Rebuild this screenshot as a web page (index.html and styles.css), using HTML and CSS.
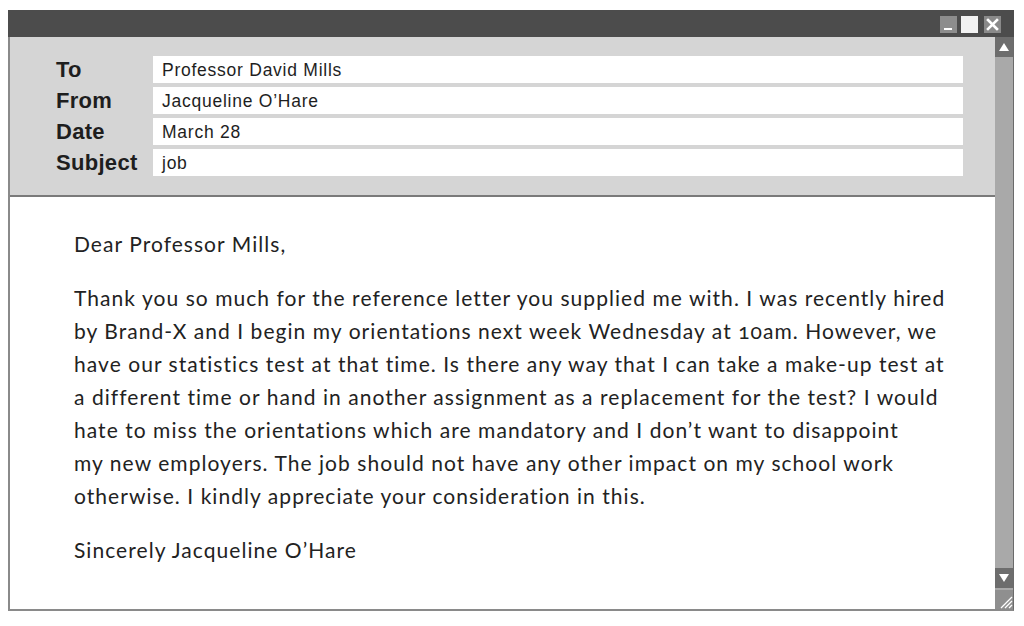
FILE: index.html
```html
<!DOCTYPE html>
<html>
<head>
<meta charset="utf-8">
<link rel="stylesheet" href="styles.css">
</head>
<body>
<div class="window">
  <div class="titlebar">
    <span class="ctl ctl-min"><svg width="17" height="17" viewBox="0 0 17 17"><rect x="4" y="12" width="8" height="2" fill="#fff"/></svg></span>
    <span class="ctl ctl-max"></span>
    <span class="ctl ctl-close"><svg width="17" height="17" viewBox="0 0 17 17"><path d="M4 4 L13 13 M13 4 L4 13" stroke="#fff" stroke-width="2.6" stroke-linecap="square"/></svg></span>
  </div>
  <div class="frame">
    <div class="main">
      <div class="header">
        <div class="label">To</div><div class="field">Professor David Mills</div>
        <div class="label">From</div><div class="field">Jacqueline O’Hare</div>
        <div class="label">Date</div><div class="field">March 28</div>
        <div class="label">Subject</div><div class="field">job</div>
      </div>
      <div class="letter">
        <p>Dear Professor Mills,</p>
        <p>Thank you so much for the reference letter you supplied me with. I was recently hired by Brand-X and I begin my orientations next week Wednesday at 10am. However, we have our statistics test at that time. Is there any way that I can take a make-up test at a different time or hand in another assignment as a replacement for the test? I would hate to miss the orientations which are mandatory and I don’t want to disappoint<br>my new employers. The job should not have any other impact on my school work otherwise. I kindly appreciate your consideration in this.</p>
        <p>Sincerely Jacqueline O’Hare</p>
      </div>
    </div>
    <div class="scrollbar">
      <div class="sbtn"><svg width="18" height="20" viewBox="0 0 18 20"><path d="M4 14 L9 6 L14 14 Z" fill="#fff"/></svg></div>
      <div class="track"></div>
      <div class="sbtn"><svg width="18" height="20" viewBox="0 0 18 20"><path d="M4 6 L9 14 L14 6 Z" fill="#fff"/></svg></div>
      <div class="grip"><svg width="18" height="19" viewBox="0 0 18 19"><path d="M6 18 L17 7 M10 18 L17 11 M14 18 L17 15" stroke="#fff" stroke-width="1.3"/></svg></div>
    </div>
  </div>
</div>
</body>
</html>
```
FILE: styles.css
```css
html, body {
  margin: 0;
  padding: 0;
  background: #fff;
}
.window {
  margin: 10px 0 0 8px;
  width: 1006px;
  height: 601px;
  box-sizing: border-box;
  border-left: 2px solid #8a8a8a;
  border-right: 1px solid #6a6a6a;
  border-bottom: 2px solid #8a8a8a;
  display: flex;
  flex-direction: column;
  background: #fff;
}
.titlebar {
  height: 27px;
  background: #4c4c4c;
  display: flex;
  align-items: center;
  justify-content: flex-end;
  gap: 4px;
  padding-right: 13px;
  margin-left: -2px;
  margin-right: -1px;
}
.ctl {
  width: 17px;
  height: 17px;
  display: block;
  margin-top: 1px;
}
.ctl svg { display: block; }
.ctl-min { background: #8d8d8d; }
.ctl-max { background: #f2f2f2; }
.ctl-close { background: #8a8a8a; margin-left: 2px; }
.frame {
  flex: 1;
  display: flex;
  min-height: 0;
}
.main {
  flex: 1;
  display: flex;
  flex-direction: column;
}
.header {
  background: #d5d5d5;
  border-bottom: 2px solid #7a7a7a;
  padding: 19px 32px 19px 46px;
  display: grid;
  grid-template-columns: 97px 1fr;
  row-gap: 4px;
}
.label {
  font-family: "Liberation Sans", Arial, sans-serif;
  font-weight: bold;
  font-size: 22px;
  letter-spacing: 0.3px;
  line-height: 27px;
  color: #1e1e1e;
}
.field {
  background: #fff;
  height: 27px;
  line-height: 28px;
  padding-left: 9px;
  font-family: "Liberation Sans", Arial, sans-serif;
  font-size: 17.5px;
  letter-spacing: 0.75px;
  color: #1e1e1e;
}
.letter {
  flex: 1;
  padding: 30px 44px 0 64px;
  font-family: Lato, "Open Sans", sans-serif;
  font-size: 21px;
  letter-spacing: 1.05px;
  line-height: 33px;
  color: #222;
  font-variant-numeric: oldstyle-nums;
}
.letter p {
  margin: 0 0 21px 0;
}
.scrollbar {
  width: 18px;
  background: #a9a9a9;
  display: flex;
  flex-direction: column;
}
.sbtn {
  height: 20px;
  background: #6d6d6d;
}
.sbtn svg, .grip svg { display: block; }
.track { flex: 1; }
.grip {
  margin-top: 2px;
  height: 19px;
  background: #8f8f8f;
}
```
